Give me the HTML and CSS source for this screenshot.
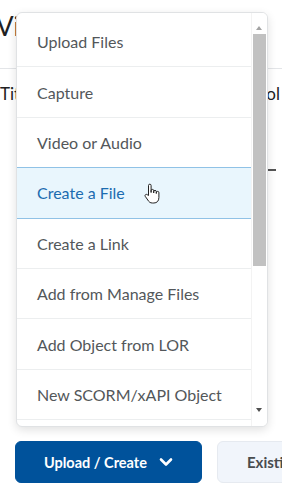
FILE: index.html
```html
<!DOCTYPE html>
<html lang="en">

<head>
    <meta charset="UTF-8">
    <meta name="viewport" content="width=device-width, initial-scale=1.0">
    <title>Upload / Create</title>
    <link rel="stylesheet" href="styles.css">
</head>

<body>
    <div class="page">
        <h1 class="page-title">Visible Content</h1>
        <div class="tab-row">
            <span class="tab">Title</span>
            <span class="tab tab-right">Tool</span>
        </div>
        <div class="side-mark"></div>

        <div class="actions">
            <button class="btn btn-primary">Upload / Create
                <svg class="chevron" width="14" height="10" viewBox="0 0 14 10">
                    <path d="M2 2.5 L7 7.5 L12 2.5" fill="none" stroke="#fff" stroke-width="2.6" stroke-linecap="round" stroke-linejoin="round"/>
                </svg>
            </button>
            <button class="btn btn-secondary">Existing Activities</button>
        </div>

        <!-- open dropdown menu over the page -->
        <div class="menu">
            <ul class="menu-list">
                <li class="menu-item">Upload Files</li>
                <li class="menu-item">Capture</li>
                <li class="menu-item">Video or Audio</li>
                <li class="menu-item active">Create a File
                    <svg class="hand" width="18" height="23" viewBox="0 0 18 22">
                        <path d="M5.5 13 V3 a1.3 1.3 0 0 1 2.6 0 V10 V8.2 a1.3 1.3 0 0 1 2.6 0 V10.5 V9.2 a1.3 1.3 0 0 1 2.6 0 V11 V10.2 a1.3 1.3 0 0 1 2.6 0 V15 c0 3.5 -2 5.5 -5 5.5 h-1.5 c-2.2 0 -3.4 -1 -4.6 -3 L2.2 13.8 a1.3 1.3 0 0 1 2 -1.6 Z"
                            fill="#fff" stroke="#222" stroke-width="1" stroke-linejoin="round"/>
                    </svg>
                </li>
                <li class="menu-item">Create a Link</li>
                <li class="menu-item">Add from Manage Files</li>
                <li class="menu-item">Add Object from LOR</li>
                <li class="menu-item">New SCORM/xAPI Object</li>
            </ul>
            <div class="scrollbar">
                <div class="arrow arrow-up"></div>
                <div class="thumb"></div>
                <div class="track"></div>
                <div class="arrow arrow-down"></div>
            </div>
        </div>
    </div>
</body>

</html>
```

FILE: styles.css
```css
body {
    margin: 0;
    font-family: Lato, 'Noto Sans', sans-serif;
    background: #fff;
    color: #494c4e;
    overflow: hidden;
}

.page {
    position: relative;
    width: 282px;
    height: 496px;
    overflow: hidden;
}

.page-title {
    margin: 0;
    padding: 10px 0 0 0;
    margin-left: -4px;
    font-size: 26px;
    font-weight: 400;
    color: #202122;
    height: 58px;
    white-space: nowrap;
}

.tab-row {
    border-top: 1px solid #e3e5e8;
    display: flex;
    justify-content: space-between;
    padding-top: 14px;
    height: 40px;
    font-size: 17px;
    color: #202122;
}

.tab {
    white-space: nowrap;
}

.tab-right {
    margin-right: 2px;
}

.side-mark {
    margin: 46px 0 0 268px;
    width: 8px;
    height: 2px;
    background: #555;
}

.actions {
    display: flex;
    gap: 15px;
    margin-top: 270px;
    padding-left: 15px;
    white-space: nowrap;
}

.btn {
    flex-shrink: 0;
    height: 42px;
    border-radius: 6px;
    font-family: Lato, 'Noto Sans', sans-serif;
    font-size: 14.5px;
    font-weight: 700;
    display: flex;
    align-items: center;
}

.btn-primary {
    width: 187px;
    background: #00529b;
    border: 1px solid #00529b;
    color: #fff;
    padding: 0 0 0 28px;
    gap: 12px;
}

.btn-secondary {
    width: 180px;
    background: #f1f5fb;
    border: 1px solid #e6eaf0;
    color: #494c4e;
    padding: 0 0 0 29px;
    font-size: 15px;
}

.menu {
    position: absolute;
    left: 16px;
    top: 12px;
    width: 250px;
    height: 413px;
    border: 1px solid #e0e2e4;
    border-radius: 6px;
    background: #fff;
    box-shadow: 0 3px 10px rgba(0, 0, 0, 0.12);
    display: flex;
    overflow: hidden;
}

.menu-list {
    list-style: none;
    margin: 0;
    padding: 4px 0 0 0;
    flex: 1;
}

.menu-item {
    height: 49.4px;
    border-bottom: 1px solid #eceeef;
    display: flex;
    align-items: center;
    padding-left: 20px;
    font-size: 16px;
    color: #53575a;
    white-space: nowrap;
    position: relative;
}

.menu-item.active {
    background: #e9f6fd;
    color: #1c6cb0;
    border-top: 1px solid #90c2e6;
    border-bottom: 1px solid #90c2e6;
    margin-top: -1px;
}

.hand {
    position: absolute;
    left: 126px;
    top: 14px;
}

.scrollbar {
    width: 15px;
    display: flex;
    flex-direction: column;
    background: #fff;
    border-left: 1px solid #f3f3f3;
}

.arrow {
    height: 14px;
    position: relative;
}

.arrow::after {
    content: "";
    position: absolute;
    left: 4px;
    border-left: 3.5px solid transparent;
    border-right: 3.5px solid transparent;
}

.arrow-up::after {
    top: 6px;
    border-bottom: 4px solid #a3a3a3;
}

.arrow-down::after {
    top: 4px;
    border-top: 4px solid #505050;
}

.arrow-up {
    margin-top: 7px;
}

.thumb {
    margin: 0 1px;
    height: 232px;
    background: #c1c1c1;
}

.track {
    flex: 1;
}

.arrow-down {
    margin-bottom: 8px;
}
```
